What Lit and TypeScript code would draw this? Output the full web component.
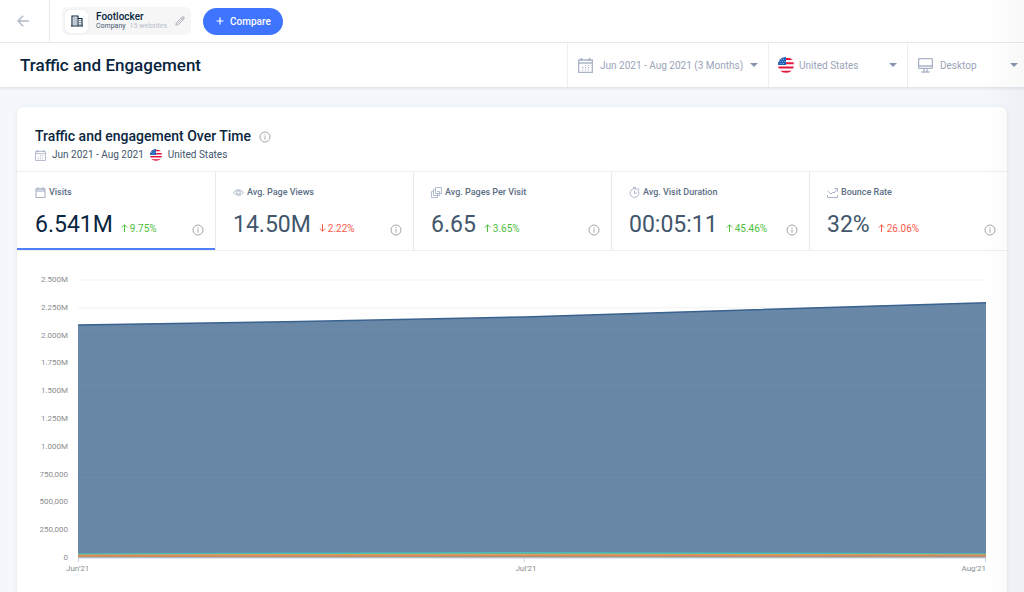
import { LitElement, html, css, svg } from "lit";
import { customElement, property, state } from "lit/decorators.js";
import { classMap } from "lit/directives/class-map.js";

type IconName =
  | "back" | "building" | "pencil" | "plus" | "calendar" | "monitor" | "caret" | "flag"
  | "info" | "visits" | "eye" | "pages" | "timer" | "bounce" | "up" | "down";

const stroke = (d: string, width = 1) =>
  svg`<path d=${d} fill="none" stroke="currentColor" stroke-width=${width} />`;

const ICONS: Record<IconName, { box: string; art: unknown }> = {
  back: { box: "0 0 12 12", art: stroke("M12 6H1M6.2 .8 1 6l5.200 5.200", 1.5) },
  building: {
    box: "0 0 12 12",
    art: svg`${stroke("M1 1h6v10H1zM7 3.500h4V11H7M0 11h12", 1.1)}
      ${stroke("M2.600 3h1M4.600 3h1M2.600 5h1M4.600 5h1M2.600 7h1M4.600 7h1M2.600 9h1M4.600 9h1M8.500 5.500h1M8.500 7.500h1M8.500 9.300h1", 1)}`,
  },
  pencil: {
    box: "0 0 10 10",
    art: svg`${stroke("M.8 9.200 1.300 6.700 6.600 1.400 8.600 3.400 3.300 8.700zM6 2l2 2M2.300 7.700l4.200-4.200", 1)}
      <path d="M7 1 8 .2Q8.500 0 9 .4L9.700 1.100Q10 1.500 9.700 2L9 3z" fill="currentColor" />`,
  },
  plus: { box: "0 0 8 8", art: stroke("M4 .5v7M.5 4h7", 1.200) },
  calendar: {
    box: "0 0 15 15",
    art: svg`${stroke("M.7 2h13.600v12.300H.7zM.7 5h13.600", 1.3)}
      ${stroke("M3.500 0v3M11.500 0v3", 1.8)}
      ${stroke("M6.900 7.500h1.300M9.800 7.500h1.300M4 9.700h1.300M6.900 9.700h1.300M9.800 9.700h1.300M4 12h1.300M6.900 12h1.300M9.800 12h1.300", 1.200)}`,
  },
  monitor: {
    box: "0 0 15 15",
    art: stroke("M1.500 .6h12q.9 0 .9.9v8q0 .9-.9.9h-12q-.9 0-.9-.9v-8q0-.9.9-.9zM.6 8h13.800M6 10.500v3M9 10.500v3M3.500 14h8", 1.300),
  },
  caret: { box: "0 0 8 4", art: svg`<path d="M0 0h8L4 4z" fill="currentColor" />` },
  flag: {
    box: "0 0 16 16",
    art: svg`<clipPath id="disc"><circle cx="8" cy="8" r="8" /></clipPath>
      <g clip-path="url(#disc)">
        <path d="M0 0h16v16H0z" fill="#fff" />
        <path d="M0 2h16M0 6.200h16M0 10.400h16M0 14.800h16" stroke="#e4173e" stroke-width="2" />
        <path d="M0 0h8v8H0z" fill="#1f62b8" />
        <path d="M2.500 2.500h1M5 2.500h1M1.500 4.500h1M4 4.500h1M6.300 4.500h1M2.500 6.500h1M5 6.500h1" stroke="#8fb4e0" />
      </g>`,
  },
  info: {
    box: "0 0 12 12",
    art: svg`<circle cx="6" cy="6" r="5" fill="none" stroke="currentColor" />
      ${stroke("M6 5.200v3.500M6 3.200v1.200", 1)}`,
  },
  visits: {
    box: "0 0 11 11",
    art: svg`${stroke("M1 1.800h9v8.700H1zM3 0v2.500M8 0v2.500", 1.1)}
      <path d="M1 2h9v3H1z" fill="currentColor" opacity=".6" />`,
  },
  eye: {
    box: "0 0 12 11",
    art: svg`${stroke("M.6 5.500Q6-.8 11.400 5.500 6 11.800.6 5.500z", 1)}
      <circle cx="6" cy="5.500" r="2" fill="none" stroke="currentColor" stroke-width="1.1" />`,
  },
  pages: {
    box: "0 0 11 11",
    art: stroke("M4.500.5h6v6h-6zM4.500 2.500h-2v6h6v-4H6M2.500 4.500h-2v6h6v-4H4.500", .9),
  },
  timer: {
    box: "0 0 11 11",
    art: svg`<circle cx="5.500" cy="6" r="4.400" fill="none" stroke="currentColor" />
      ${stroke("M5.500 3.500V6.200H8M4 .5h3M9 1.200l1.300 1.300", 1)}`,
  },
  bounce: {
    box: "0 0 11 11",
    art: stroke("M.5 8v2.500h10V8M.8 4 4 7 6 5 7 6 10.500 2M7.500 1.500h3v3", 1),
  },
  up: { box: "0 0 7 8", art: stroke("M3.500 8V.8M.8 3.500 3.500.8 6.200 3.500", 1) },
  down: { box: "0 0 7 8", art: stroke("M3.500 0v7.200M.8 4.500l2.700 2.700 2.700-2.700", 1) },
};

@customElement("app-icon")
class AppIcon extends LitElement {
  @property() name: IconName = "info";
  static styles = css`
    :host { display: inline-flex; flex: none; width: 12px; height: 12px; }
    svg { width: 100%; height: 100%; }
  `;
  render() {
    const icon = ICONS[this.name];
    return html`<svg viewBox=${icon.box} aria-hidden="true">${icon.art}</svg>`;
  }
}

interface Metric {
  icon: IconName;
  label: string;
  value: string;
  change: string;
  direction: "up" | "down";
  good: boolean;
}

const METRICS: Metric[] = [
  { icon: "visits", label: "Visits", value: "6.541M", change: "9.75%", direction: "up", good: true },
  { icon: "eye", label: "Avg. Page Views", value: "14.50M", change: "2.22%", direction: "down", good: false },
  { icon: "pages", label: "Avg. Pages Per Visit", value: "6.65", change: "3.65%", direction: "up", good: true },
  { icon: "timer", label: "Avg. Visit Duration", value: "00:05:11", change: "45.46%", direction: "up", good: true },
  { icon: "bounce", label: "Bounce Rate", value: "32%", change: "26.06%", direction: "up", good: false },
];

@customElement("metric-tabs")
class MetricTabs extends LitElement {
  @state() private selected = 0;
  static styles = css`
    :host { display: block; }
    .tabs {
      display: grid;
      grid-template-columns: repeat(5, 1fr);
      border-block: 1px solid #eceef1;
    }
    .tab {
      display: flex;
      flex-direction: column;
      gap: 11px;
      min-width: 0;
      height: 78px;
      padding: 14px 11px 0 17px;
      border: 0;
      border-left: 1px solid #e6e9ed;
      background: none;
      font: inherit;
      color: #42566c;
      text-align: left;
      cursor: pointer;
    }
    .tab:first-child { padding-left: 18px; border-left: 0; }
    .tab.selected { color: #092540; box-shadow: inset 0 -2px #4f80f8; }
    .label {
      display: flex;
      align-items: center;
      gap: 3px;
      font-size: 9px;
      line-height: 12px;
      font-weight: 500;
      color: #5b6e84;
      white-space: nowrap;
    }
    .label app-icon { width: 11px; height: 11px; color: #aab5c9; }
    .row { display: flex; align-items: baseline; align-self: stretch; gap: 8px; }
    .value { font-size: 23px; line-height: 32px; }
    .change { display: flex; align-items: center; gap: 2px; font-size: 10px; color: #ff5a4a; }
    .change app-icon { width: 7px; height: 8px; }
    .change.good { color: #50bf40; }
    .info { align-self: center; margin-left: auto; padding-top: 10px; line-height: 0; color: #a4a7ab; }
  `;
  render() {
    return html`<div class="tabs" role="tablist">
      ${METRICS.map((m, i) => html`
        <button class=${classMap({ tab: true, selected: i === this.selected })} role="tab"
          aria-selected=${i === this.selected} @click=${() => (this.selected = i)}>
          <span class="label"><app-icon name=${m.icon}></app-icon>${m.label}</span>
          <span class="row">
            <span class="value">${m.value}</span>
            <span class=${classMap({ change: true, good: m.good })}>
              <app-icon name=${m.direction}></app-icon>${m.change}
            </span>
            <span class="info"><app-icon name="info"></app-icon></span>
          </span>
        </button>`)}
    </div>`;
  }
}

const TICKS = ["2.500M", "2.250M", "2.000M", "1.750M", "1.500M", "1.250M", "1.000M", "750,000", "500,000", "250,000", "0"];
const MONTHS = ["Jun'21", "Jul'21", "Aug'21"];
const MAX = 2500;
/* Monthly visits in thousands, from the back layer to the front one. */
const SERIES = [
  { line: "#3a628f", fill: "#6988a8", width: 1.5, values: [2095, 2168, 2296] },
  { line: "#48bdb9", fill: "#58a9a7", width: 1.5, values: [35, 47, 35] },
  { line: "#dba65c", fill: "#c9a06a", width: 1.5, values: [25, 32, 27] },
  { line: "#dd8358", fill: "#8da092", width: 1.5, values: [18, 20, 20] },
];

@customElement("visits-chart")
class VisitsChart extends LitElement {
  static styles = css`
    :host { display: block; }
    .chart {
      display: grid;
      grid-template-columns: 51px 1fr;
      column-gap: 10px;
      padding: 24px 21px 16px 0;
      font-size: 8px;
      line-height: 10px;
      color: #8b8d90;
    }
    .ticks {
      display: flex;
      flex-direction: column;
      justify-content: space-between;
      height: 288px;
      text-align: right;
    }
    .plot { display: block; width: 100%; height: 288px; padding-block: 5px; box-sizing: border-box; overflow: visible; }
    .months { grid-column: 2; display: grid; grid-template-columns: repeat(3, 1fr); margin-left: -12px; padding-top: 1px; }
    .month:nth-child(2) { text-align: center; }
    .month:nth-child(3) { text-align: right; }
  `;
  private path(values: number[]) {
    const y = values.map((v) => 278 - (v / MAX) * 278);
    const m = (y[2] - y[0]) / 4;
    return `M0 ${y[0]}C150 ${y[0] + (y[1] - y[0]) * 0.3} 296 ${y[1] - m * 0.7} 446 ${y[1]}S758 ${y[2] + (y[1] - y[2]) * 0.25} 908 ${y[2]}`;
  }
  render() {
    return html`<div class="chart">
      <div class="ticks">${TICKS.map((t) => html`<span>${t}</span>`)}</div>
      <svg class="plot" viewBox="0 0 908 278" preserveAspectRatio="none" role="img" aria-label="Visits over time">
        ${TICKS.map((_, i) => svg`<path d=${`M0 ${i * 27.8}H908`} stroke="#f3f3f4" />`)}
        ${SERIES.map((s) => svg`
          <path d=${this.path(s.values) + "V278H0z"} fill=${s.fill} />
          <path d=${this.path(s.values)} fill="none" stroke=${s.line} stroke-width=${s.width} />`)}
        ${TICKS.slice(2, -1).map((_, i) => svg`<path d=${`M0 ${(i + 2) * 27.8}H908`} stroke="#6484a5" stroke-width=".5" />`)}
        <path d="M0 278H908M.5 278v4M446 278v4M907.500 278v4" stroke="#ccd6eb" />
      </svg>
      <div class="months">${MONTHS.map((m) => html`<span class="month">${m}</span>`)}</div>
    </div>`;
  }
}

@customElement("app-root")
class AppRoot extends LitElement {
  static styles = css`
    :host {
      display: flex;
      flex-direction: column;
      position: relative;
      min-height: 100vh;
      background: #f4f7fc;
      font-family: Roboto, "Liberation Sans", sans-serif;
      color: #092540;
    }
    :host::after {
      content: "";
      position: absolute;
      inset: 0 0 0 auto;
      width: 40px;
      background: linear-gradient(to right, rgb(20 40 60 / 0), rgb(20 40 60 / 0.03));
      pointer-events: none;
    }
    button, select { margin: 0; border: 0; background: none; font: inherit; color: inherit; cursor: pointer; }
    h1, h2 { margin: 0; font-weight: 500; }
    .topbar { display: flex; align-items: center; height: 42px; background: #fff; border-bottom: 1px solid #eceef1; }
    .back { display: flex; align-items: center; align-self: stretch; width: 50px; padding: 0 0 0 17px; border-right: 1px solid #e6e9ed; color: #b0bac8; }
    .chip { display: flex; align-items: center; gap: 8px; height: 28px; box-sizing: border-box; margin-left: 12px; padding: 0 6px 0 3px; border-radius: 6px; background: #f6f6f6; text-align: left; }
    .tile { display: grid; place-items: center; width: 23px; height: 23px; border-radius: 5px; background: #fff; box-shadow: 0 0 1px #c9ced6; }
    .tile app-icon { width: 12px; height: 12px; }
    .name { display: block; font-size: 10px; line-height: 11px; font-weight: 500; }
    .kind { display: flex; gap: 4px; font-size: 7px; line-height: 9px; color: #42566c; }
    .sites { color: #b9c0c9; }
    .pencil { width: 10px; height: 10px; color: #b5b8bd; }
    .compare { display: flex; align-items: center; gap: 6px; height: 27px; margin-left: 12px; padding: 0 12px 0 13px; border-radius: 14px; background: #3e74fe; color: #fff; font-size: 10px; font-weight: 500; }
    .compare app-icon { width: 8px; height: 8px; }
    .titlebar { display: flex; align-items: stretch; height: 44px; background: #fff; box-shadow: 0 1px 3px rgb(30 50 80 / 0.14); }
    .title { align-self: center; flex: 1; padding-left: 20px; font-size: 17px; line-height: 24px; }
    .filter { display: flex; align-items: center; box-sizing: border-box; padding: 0 10px; gap: 7px; border-left: 1px solid #eceef1; font-size: 10px; color: #9aa3b8; }
    .period { width: 201px; white-space: nowrap; }
    .period app-icon + span { flex: 1; text-align: left; }
    .country { width: 139px; gap: 5px; padding-left: 9px; }
    .device { width: 117px; padding-right: 6px; }
    .filter app-icon { width: 15px; height: 15px; color: #aab4c6; }
    .filter .flag { width: 16px; height: 16px; }
    .filter .caret { width: 8px; height: 4px; color: #8995b0; }
    .select { flex: 1; min-width: 0; padding: 0; appearance: none; outline-offset: 4px; }
    .card { flex: 1; margin: 20px 17px 0; border-radius: 6px 6px 0 0; background: #fff; box-shadow: 0 1px 4px rgb(30 50 80 / 0.1); }
    .head { display: flex; flex-direction: column; gap: 2px; padding: 20px 18px 8px; }
    .heading { display: flex; align-items: center; gap: 8px; }
    .heading h2 { font-size: 14px; line-height: 18px; }
    .heading app-icon { color: #a4a7ab; padding-top: 2px; }
    .scope { display: flex; align-items: center; gap: 6px; font-size: 10px; line-height: 16px; color: #42566c; }
    .scope app-icon { width: 12px; height: 12px; color: #aeb8cb; }
    .scope .date { width: 11px; height: 11px; }
  `;
  render() {
    return html`
      <header class="topbar">
        <button class="back" aria-label="Back"><app-icon name="back"></app-icon></button>
        <button class="chip">
          <span class="tile"><app-icon name="building"></app-icon></span>
          <span>
            <span class="name">Footlocker</span>
            <span class="kind">Company <span class="sites">15 websites</span></span>
          </span>
          <app-icon class="pencil" name="pencil"></app-icon>
        </button>
        <button class="compare"><app-icon name="plus"></app-icon>Compare</button>
      </header>
      <div class="titlebar">
        <h1 class="title">Traffic and Engagement</h1>
        <button class="filter period">
          <app-icon name="calendar"></app-icon>
          <span>Jun 2021 - Aug 2021 (3 Months)</span>
          <app-icon class="caret" name="caret"></app-icon>
        </button>
        <label class="filter country">
          <app-icon class="flag" name="flag"></app-icon>
          <select class="select" aria-label="Country"><option>United States</option></select>
          <app-icon class="caret" name="caret"></app-icon>
        </label>
        <label class="filter device">
          <app-icon name="monitor"></app-icon>
          <select class="select" aria-label="Device"><option>Desktop</option></select>
          <app-icon class="caret" name="caret"></app-icon>
        </label>
      </div>
      <main class="card">
        <div class="head">
          <div class="heading"><h2>Traffic and engagement Over Time</h2><app-icon name="info"></app-icon></div>
          <div class="scope">
            <app-icon class="date" name="calendar"></app-icon><span>Jun 2021 - Aug 2021</span>
            <app-icon name="flag"></app-icon><span>United States</span>
          </div>
        </div>
        <metric-tabs></metric-tabs>
        <visits-chart></visits-chart>
      </main>`;
  }
}
